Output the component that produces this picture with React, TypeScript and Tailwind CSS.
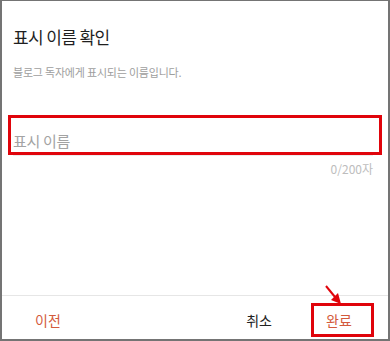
export default function App() {
  return (
    <div className="relative flex h-[341px] w-[390px] flex-col border-x-2 border-b-2 border-t border-[#747474] bg-white font-['Noto_Sans_CJK_KR',sans-serif]">
      {/* Body */}
      <div className="flex-1">
        <h1 className="px-[11px] pt-[24px] text-[17px] leading-[24px] text-[#1f1f1f] tracking-[-0.6px]">표시 이름 확인</h1>
        <p className="mt-[15px] px-[11px] text-[11px] leading-[16px] text-[#9e9e9e] tracking-[-0.2px]">
          블로그 독자에게 표시되는 이름입니다.
        </p>

        <div className="mx-[6px] mt-[35px] flex h-[40px] items-end border-[3px] border-[#e0040b] pb-[1px] pl-[2px]">
          <span className="text-[15px] leading-[20px] text-[#a3a3a3] tracking-[-0.3px]">표시 이름</span>
        </div>
        <div className="mx-[11px] mr-[15px] h-px bg-[#ececec]" />
        <div className="mt-[6px] pr-[15px] text-right text-[12px] leading-[14px] text-[#bdbdbd]">0/200자</div>
      </div>

      {/* Footer */}
      <div className="flex items-center border-t border-[#e6e6e6] pb-[2px] pl-[33px] pr-[14px] pt-[7px]">
        <button className="text-[14px] leading-[20px] text-[#d35a3c]">이전</button>
        <div className="flex-1" />
        <button className="text-[14px] leading-[20px] text-[#222]">취소</button>
        <div className="ml-[39px] flex h-[34px] w-[63px] items-center border-[3px] border-[#e0040b] pl-[12px]">
          <span className="text-[14px] leading-[20px] text-[#d35a3c]">완료</span>
        </div>
      </div>

      {/* Annotation arrow */}
      <svg className="absolute left-[318px] top-[280px]" width="26" height="26" viewBox="0 0 26 26">
        <line x1="6" y1="5" x2="15" y2="16" stroke="#e0040b" strokeWidth="2" />
        <polygon points="21,23 11,19 18,12" fill="#e0040b" />
      </svg>
    </div>
  );
}
